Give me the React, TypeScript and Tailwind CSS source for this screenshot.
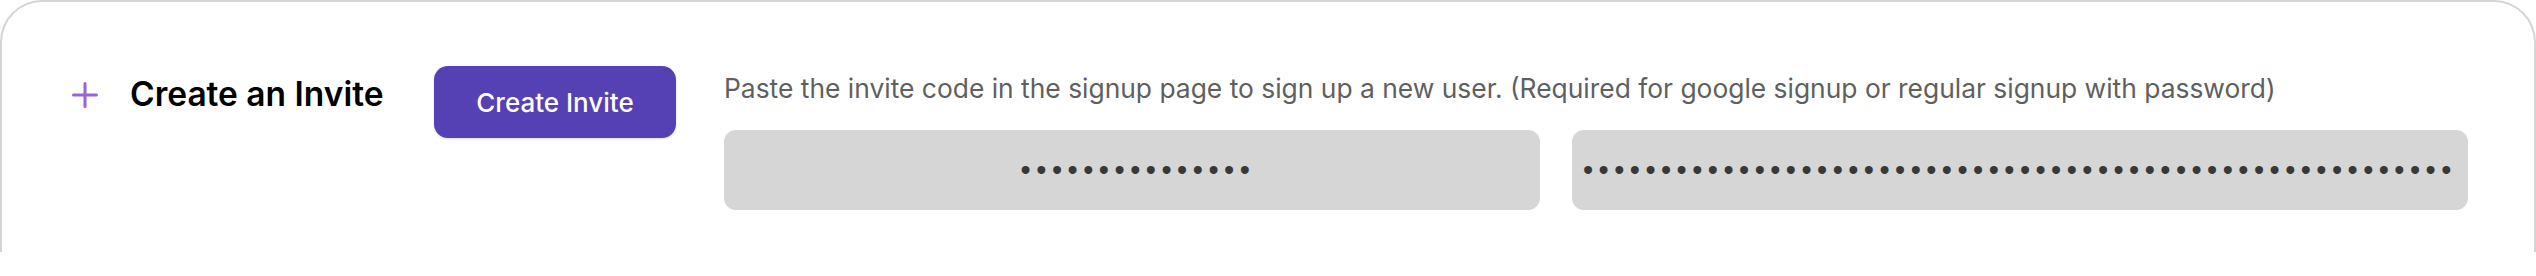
import React from "react";

const CODE = "•".repeat(15);
const LINK = "•".repeat(56);

function PlusIcon() {
    return (
        <svg width="26" height="26" viewBox="0 0 26 26" fill="none">
            <path d="M13 1.5v23M1.5 13h23" stroke="#9a63dc" strokeWidth="3" strokeLinecap="round" />
        </svg>
    );
}

export default function App() {
    return (
        <div className="w-[2536px] h-[276px] bg-white font-['Inter',sans-serif]">
            <div className="h-[252px] rounded-t-[42px] border-2 border-b-0 border-[#d5d5d5] bg-white flex items-start">
                {/* Title */}
                <div className="w-[432px] flex items-center gap-[32px] pl-[70px] mt-[76px]">
                    <PlusIcon />
                    <h2 className="text-[33.5px] leading-none font-semibold text-black">Create an Invite</h2>
                </div>

                {/* Action */}
                <button className="mt-[64px] w-[242px] h-[72px] rounded-[14px] bg-[#5541b3] text-white text-[26px] font-medium shadow-sm">
                    Create Invite
                </button>

                {/* Codes */}
                <div className="flex-1 ml-[48px] mr-[66px] mt-[73px]">
                    <p className="text-[26.4px] leading-none text-[#5f5f5f] whitespace-nowrap">
                        Paste the invite code in the signup page to sign up a new user. (Required for google signup or regular signup with password)
                    </p>
                    <div className="mt-[29px] flex gap-[32px]">
                        <div className="w-[816px] h-[80px] rounded-[12px] bg-[#d6d6d6] flex items-center justify-center pl-[12px] overflow-hidden">
                            <span className="font-['Liberation_Sans',sans-serif] text-[29px] leading-none tracking-[5.5px] text-[#383838]">
                                {CODE}
                            </span>
                        </div>
                        <div className="flex-1 h-[80px] rounded-[12px] bg-[#d6d6d6] flex items-center pl-[11px] overflow-hidden">
                            <span className="font-['Liberation_Sans',sans-serif] text-[29px] leading-none tracking-[5.45px] text-[#383838] whitespace-nowrap">
                                {LINK}
                            </span>
                        </div>
                    </div>
                </div>
            </div>
        </div>
    );
}
